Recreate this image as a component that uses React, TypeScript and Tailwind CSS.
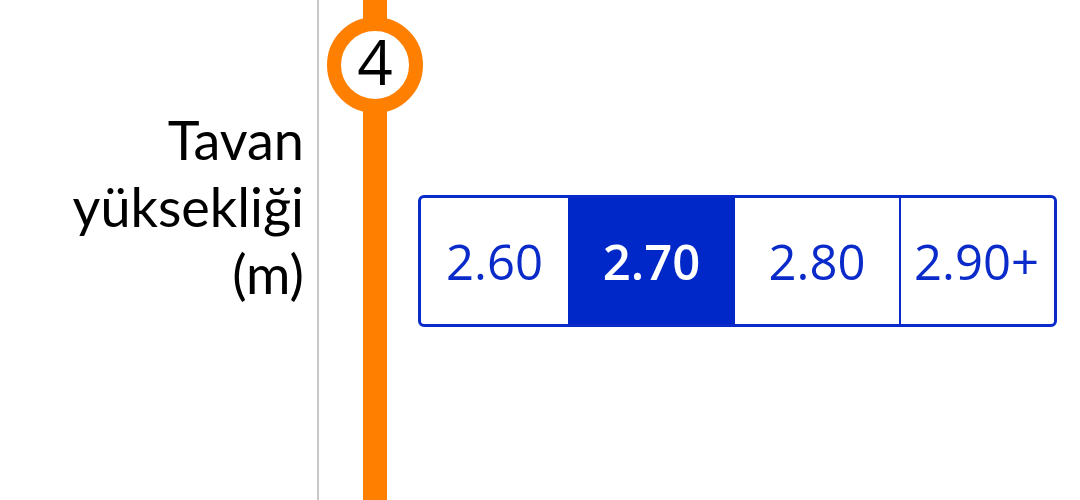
const options = [
  { label: "2.60", width: "w-[147px]" },
  { label: "2.70", width: "w-[167px]" },
  { label: "2.80", width: "w-[164px]" },
  { label: "2.90+", width: "w-[153px]" },
];

function StepMarker({ step }: { step: number }) {
  return (
    <div className="relative h-full w-[99px] pl-[44px]">
      <div className="h-full w-[24px] bg-[#ff8000]" />
      {/* step badge sits over the line */}
      <div className="absolute left-[8px] top-[17px] flex h-[96px] w-[96px] items-center justify-center rounded-full border-[14px] border-[#ff8000] bg-white pb-[9px]">
        <span className="text-[62px] leading-none text-black">{step}</span>
      </div>
    </div>
  );
}

function HeightPicker({ selected }: { selected: string }) {
  return (
    <div className="mt-[195px] flex h-[132px] w-[639px] overflow-hidden rounded-[6px] border-[3px] border-[#0a2bc9] bg-white">
      {options.map((opt, i) => {
        const active = opt.label === selected;
        return (
          <div
            key={opt.label}
            className={`flex h-full ${opt.width} items-center justify-center ${
              i === 3 ? "border-l-2 border-[#0a2bc9]" : ""
            } ${
              active
                ? "bg-[#0028c8] font-semibold text-white"
                : "text-[#0a2bc9]"
            }`}
          >
            <span className="text-[49px] leading-none">{opt.label}</span>
          </div>
        );
      })}
    </div>
  );
}

export default function App() {
  return (
    <div className="flex h-[500px] w-[1080px] overflow-hidden bg-white font-['Open_Sans',sans-serif]">
      <div className="w-[317px] pr-[13px] pt-[106px] text-right font-['Lato',sans-serif] text-[54px] leading-[67px] text-black">
        Tavan
        <br />
        yüksekliği
        <br />
        (m)
      </div>
      <div className="h-full w-[2px] bg-[#c8c8c8]" />
      <StepMarker step={4} />
      <HeightPicker selected="2.70" />
    </div>
  );
}
